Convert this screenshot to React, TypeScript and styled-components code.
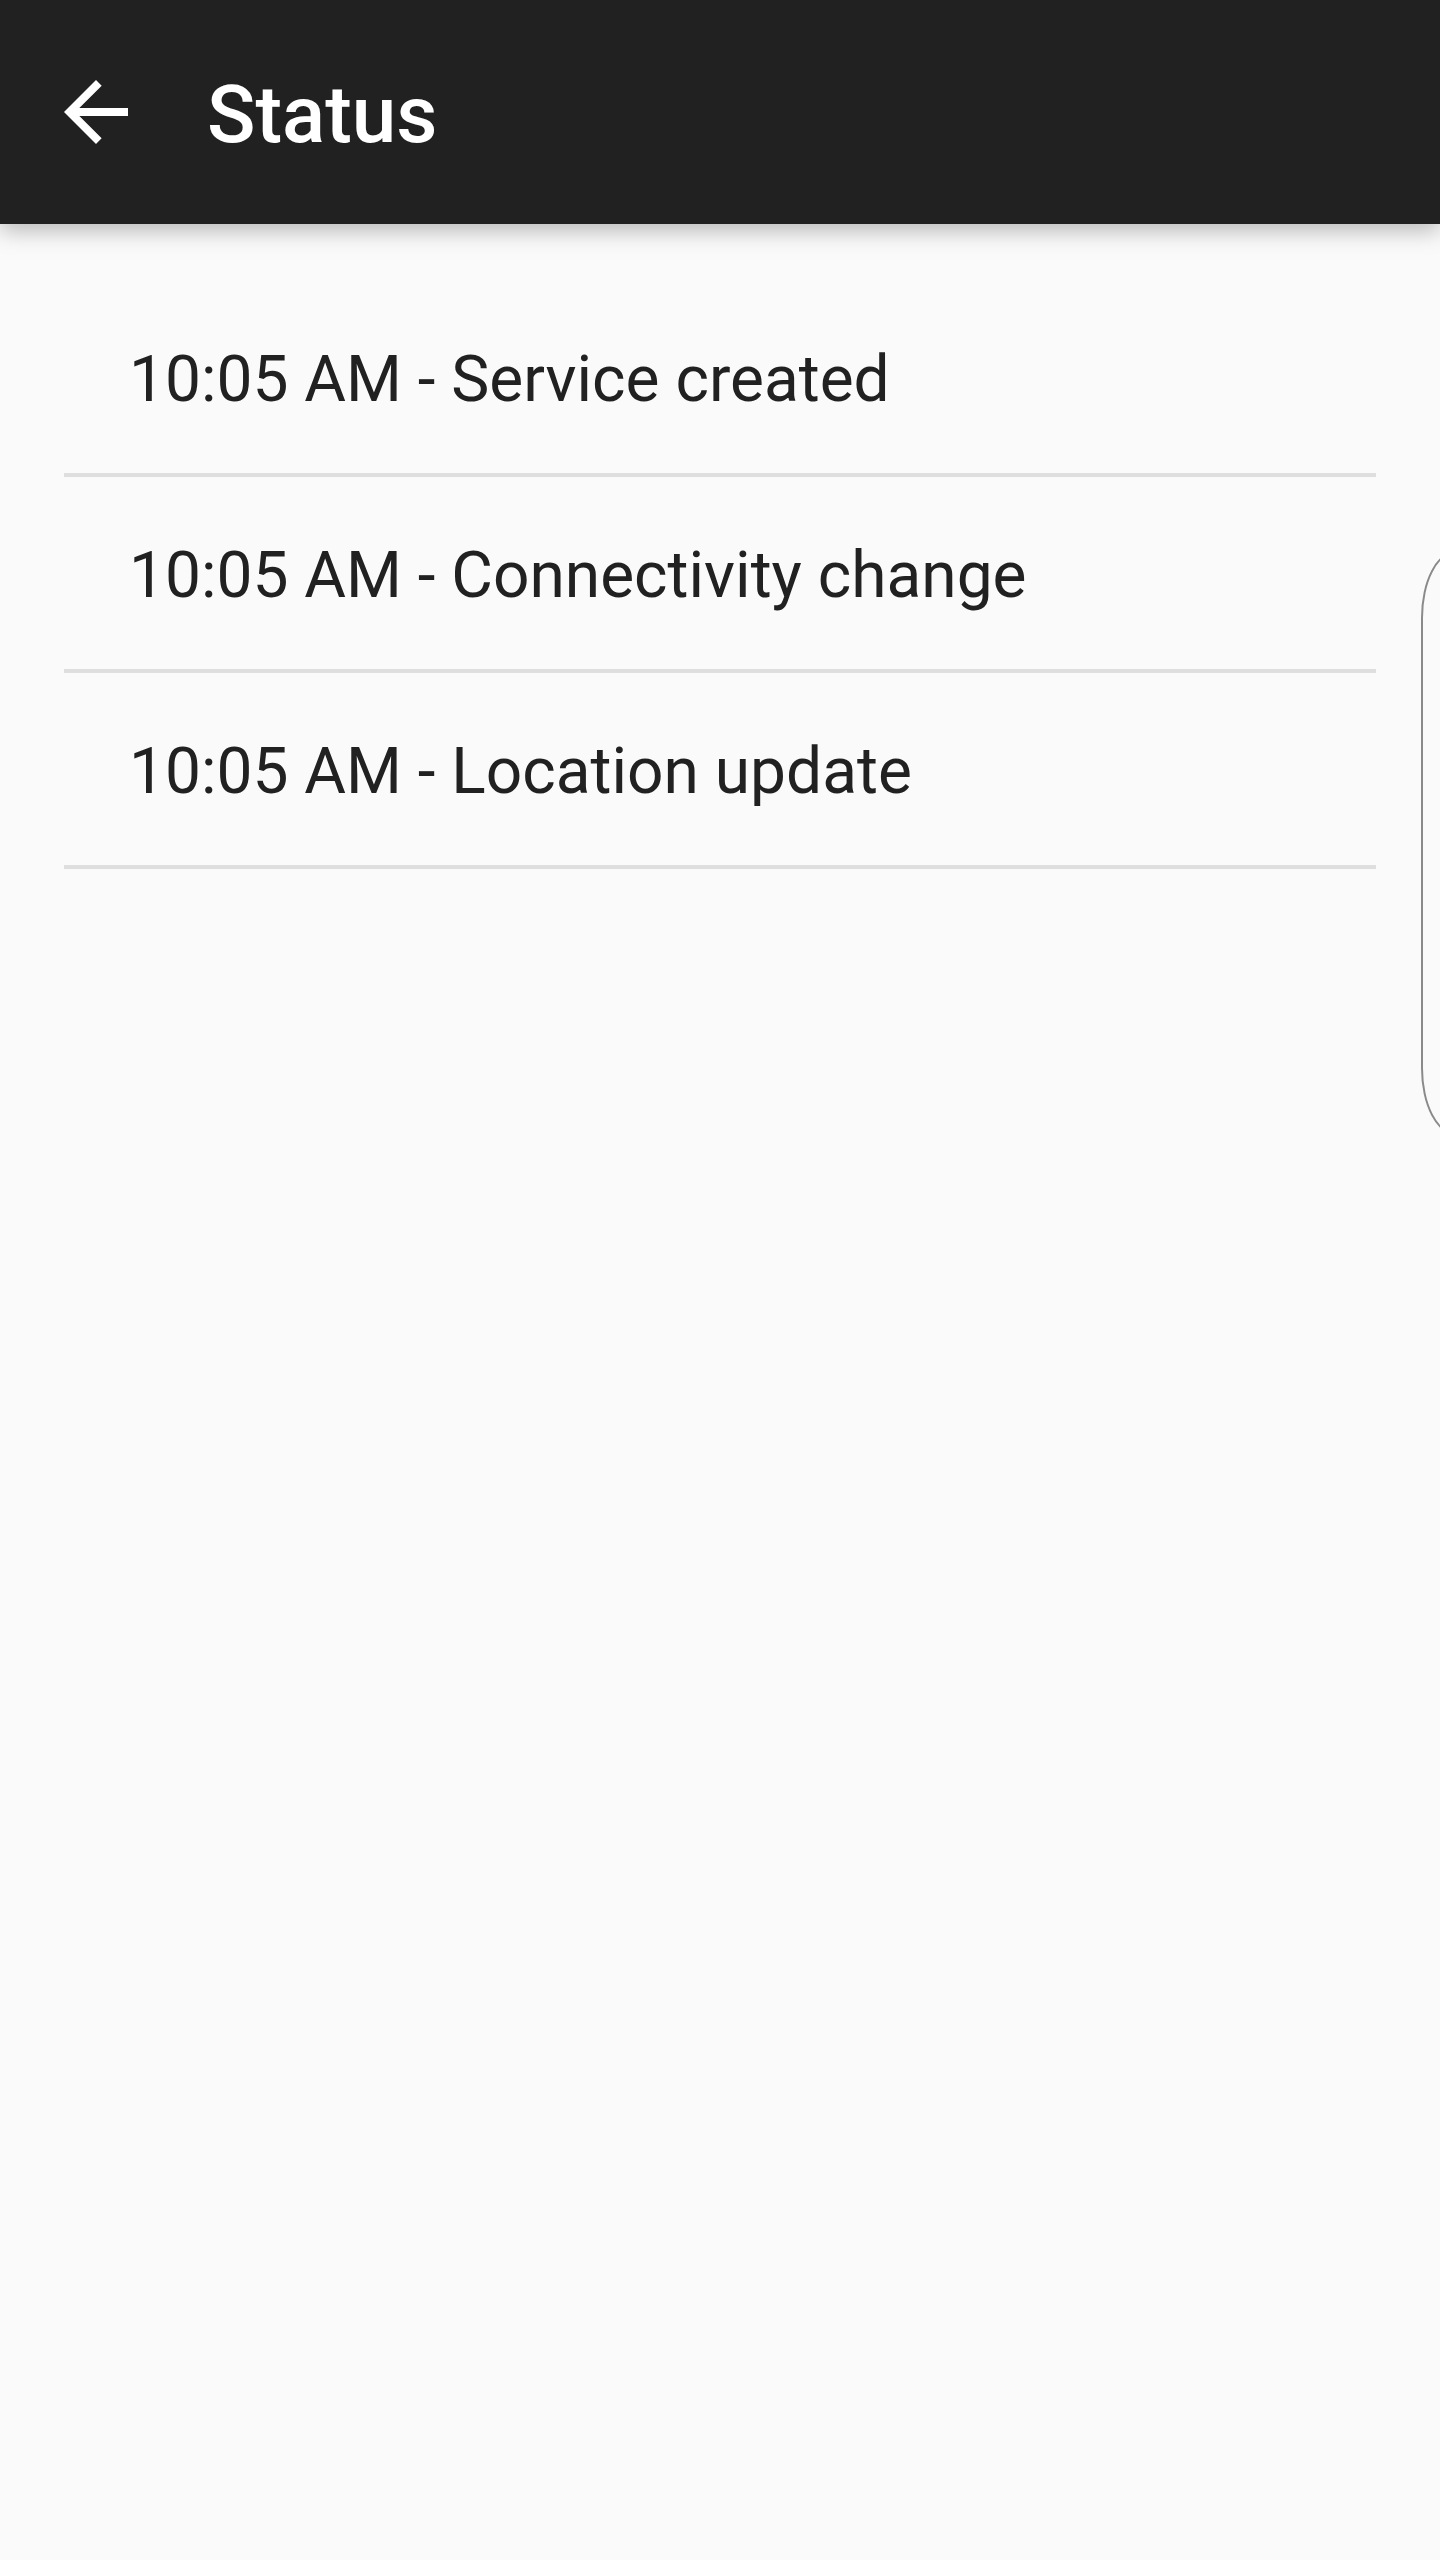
import React from "react";
import styled, { createGlobalStyle } from "styled-components";

const GlobalStyle = createGlobalStyle`
  * {
    box-sizing: border-box;
    margin: 0;
    padding: 0;
  }
  body {
    background: #fafafa;
    font-family: Roboto, "Noto Sans", sans-serif;
  }
`;

const Screen = styled.div`
  position: relative;
  min-height: 2560px;
  background: #fafafa;
  overflow: hidden;
`;

const Toolbar = styled.header`
  position: relative;
  z-index: 1;
  display: flex;
  align-items: center;
  height: 224px;
  padding-left: 48px;
  background: #212121;
  box-shadow: 0 6px 22px rgba(0, 0, 0, 0.28);
`;

const BackButton = styled.button`
  display: flex;
  align-items: center;
  justify-content: center;
  width: 96px;
  height: 96px;
  border: none;
  background: transparent;
  color: #ffffff;
  cursor: pointer;
`;

const Title = styled.h1`
  margin-left: 63px;
  padding-top: 6px;
  color: #ffffff;
  font-family: Roboto, sans-serif;
  font-size: 80px;
  font-weight: 500;
  letter-spacing: 0;
`;

const List = styled.ul`
  list-style: none;
  padding: 57px 64px 0;
`;

const Row = styled.li`
  display: flex;
  align-items: center;
  height: 196px;
  padding: 5px 0 0 65px;
  border-bottom: 4px solid #dedede;
  color: #212121;
  font-size: 64px;
  font-weight: 400;
`;

const EdgeHandle = styled.div`
  position: absolute;
  top: 551px;
  left: 1421px;
  width: 70px;
  height: 584px;
  border: 2px solid #8a8a8a;
  border-radius: 42px / 80px;
`;

const events = [
  "10:05 AM - Service created",
  "10:05 AM - Connectivity change",
  "10:05 AM - Location update",
];

export default function App() {
  return (
    <>
      <GlobalStyle />
      <Screen>
        <Toolbar>
          <BackButton aria-label="Back">
            <svg width="96" height="96" viewBox="0 0 24 24" fill="currentColor">
              <path d="M20 11H7.83l5.59-5.59L12 4l-8 8 8 8 1.41-1.41L7.83 13H20v-2z" />
            </svg>
          </BackButton>
          <Title>Status</Title>
        </Toolbar>
        <List>
          {events.map((e) => (
            <Row key={e}>{e}</Row>
          ))}
        </List>
        <EdgeHandle />
      </Screen>
    </>
  );
}
